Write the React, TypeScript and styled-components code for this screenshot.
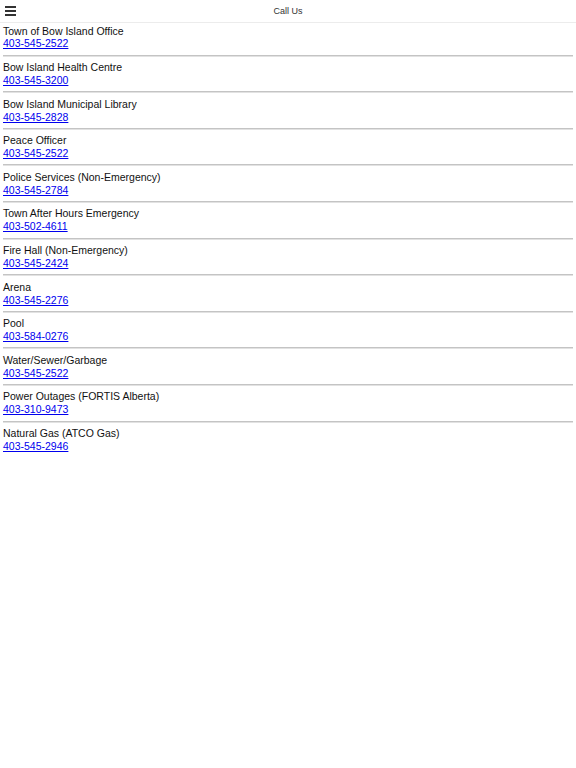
import React from 'react';
import styled, { createGlobalStyle } from 'styled-components';

const GlobalStyle = createGlobalStyle`
  body {
    margin: 0;
    background: #ffffff;
    font-family: "Liberation Sans", Arial, sans-serif;
  }
`;

const Header = styled.div`
  position: relative;
  height: 22px;
  border-bottom: 1px solid #ececec;
  display: flex;
  align-items: center;
  justify-content: center;
`;

const MenuButton = styled.button`
  position: absolute;
  left: 5px;
  top: 6px;
  width: 11px;
  height: 10px;
  padding: 0;
  border: none;
  background: none;
  display: flex;
  flex-direction: column;
  justify-content: space-between;
  & > span {
    display: block;
    height: 2px;
    background: #333;
  }
`;

const Title = styled.div`
  font-size: 9px;
  color: #333;
`;

const List = styled.div`
  padding: 1.5px 3px 0;
`;

const Item = styled.div`
  font-size: 10.5px;
  line-height: 12.9px;
  color: #111;
`;

const Name = styled.div``;

const Phone = styled.a`
  color: #0000ee;
  text-decoration: underline;
`;

const Divider = styled.div`
  height: 0;
  border-top: 1px solid #c4c4c4;
  border-bottom: 1px solid #e2e2e2;
  margin: 4.4px 0;
`;

const contacts = [
  ['Town of Bow Island Office', '403-545-2522'],
  ['Bow Island Health Centre', '403-545-3200'],
  ['Bow Island Municipal Library', '403-545-2828'],
  ['Peace Officer', '403-545-2522'],
  ['Police Services (Non-Emergency)', '403-545-2784'],
  ['Town After Hours Emergency', '403-502-4611'],
  ['Fire Hall (Non-Emergency)', '403-545-2424'],
  ['Arena', '403-545-2276'],
  ['Pool', '403-584-0276'],
  ['Water/Sewer/Garbage', '403-545-2522'],
  ['Power Outages (FORTIS Alberta)', '403-310-9473'],
  ['Natural Gas (ATCO Gas)', '403-545-2946'],
];

const App: React.FC = () => {
  return (
    <>
      <GlobalStyle />
      <Header>
        <MenuButton aria-label="menu">
          <span />
          <span />
          <span />
        </MenuButton>
        <Title>Call Us</Title>
      </Header>
      <List>
        {contacts.map(([name, phone], i) => (
          <React.Fragment key={i}>
            <Item>
              <Name>{name}</Name>
              <Phone href={`tel:${phone}`}>{phone}</Phone>
            </Item>
            {i < contacts.length - 1 && <Divider />}
          </React.Fragment>
        ))}
      </List>
    </>
  );
};

export default App;
